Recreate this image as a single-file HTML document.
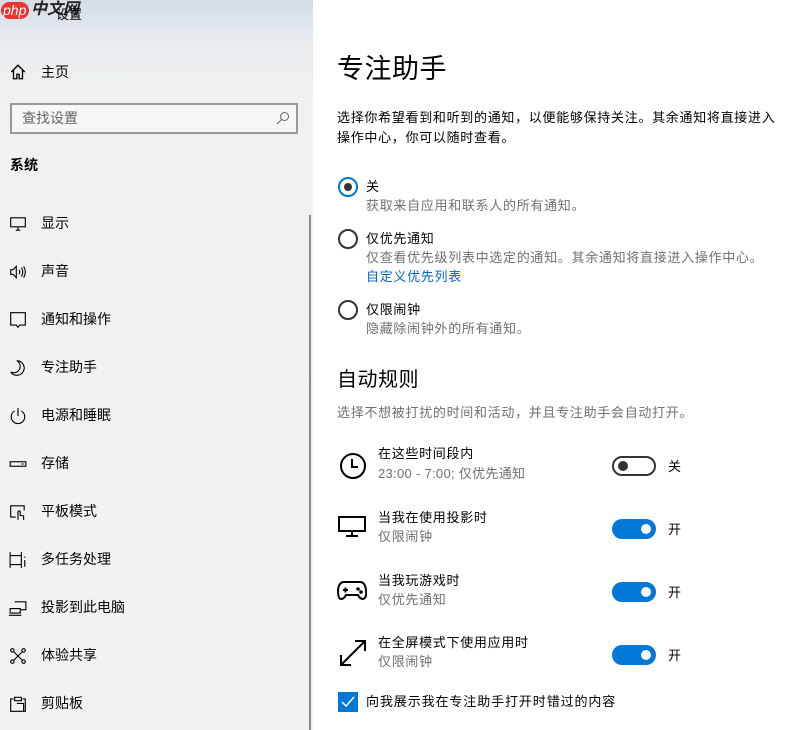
<!DOCTYPE html>
<html><head><meta charset="utf-8"><style>
*{margin:0;padding:0;box-sizing:border-box}
body{width:797px;height:730px;overflow:hidden;position:relative;background:#fff;font-family:"Liberation Sans","Noto Sans CJK SC",sans-serif;color:#000}
.side{position:absolute;left:0;top:0;width:313px;height:730px;background:linear-gradient(#d3dde4 0,#e9edf0 45px,#f1f1f1 110px,#f2f2f2 100%)}
.t{position:absolute;white-space:nowrap;line-height:1}
.s{font-size:13px;letter-spacing:.7px}
.ni{position:absolute;left:9px;width:18px;height:18px}
.nl{position:absolute;left:41px;font-size:14px;line-height:1}
.g{color:#707070}
.tog{position:absolute;left:612px;width:44px;height:20px;border-radius:10px;background:#0078d7}
.tog::after{content:"";position:absolute;right:5px;top:5px;width:10px;height:10px;border-radius:50%;background:#fff}
.tog.off{background:#fff;border:2px solid #333}
.tog.off::after{left:4px;top:3px;background:#333}
.rad{position:absolute;left:338px;width:20px;height:20px;border-radius:50%;border:2px solid #333}
</style></head><body>
<div class="side">
<div style="position:absolute;left:1px;top:2px;width:28px;height:17px;border-radius:9px;background:#e33"></div>
<div class="t" style="left:3px;top:3px;font-size:14px;font-style:italic;color:#fff">php</div>
<div class="t" style="left:31px;top:2px;font-size:16px;font-weight:bold;font-style:italic;color:#222">中文网</div>
<div class="t" style="left:56px;top:8px;font-size:13px">设置</div>
<svg class="ni" style="top:63px" viewBox="0 0 16 16" fill="none" stroke="#000" stroke-width="1.2"><path d="M2 8L8 2l6 6M4 6v8h3v-4h2v4h3V6"/></svg>
<div class="nl" style="top:65px">主页</div>
<div style="position:absolute;left:10px;top:103px;width:288px;height:31px;border:2px solid #999;background:#f7f7f7"></div>
<div class="t" style="left:22px;top:111px;font-size:14px;color:#666">查找设置</div>
<svg style="position:absolute;left:276px;top:111px" width="14" height="14" viewBox="0 0 14 14" fill="none" stroke="#666" stroke-width="1"><circle cx="8.5" cy="5.5" r="4"/><path d="M5.5 8.5L1 13"/></svg>
<div class="t" style="left:10px;top:158px;font-size:14px;font-weight:bold">系统</div>
<div style="position:absolute;left:309px;top:215px;width:2px;height:515px;background:#8a8a8a"></div>
<svg class="ni" style="top:215px" viewBox="0 0 16 16" fill="none" stroke="#000"><rect x="1.5" y="2.5" width="13" height="8"/><path d="M6 13.5h4M8 10.5v3"/></svg><div class="nl" style="top:216px">显示</div>
<svg class="ni" style="top:263px" viewBox="0 0 16 16" fill="none" stroke="#000"><path d="M1.5 6h2l3-3v10l-3-3h-2zM9 6q1 2 0 4M11 4q2.5 4 0 8M13 3q3 5 0 10"/></svg><div class="nl" style="top:264px">声音</div>
<svg class="ni" style="top:311px" viewBox="0 0 16 16" fill="none" stroke="#000"><path d="M1.5 1.5h13v11h-5l-1.5 2-1.5-2h-5z"/></svg><div class="nl" style="top:312px">通知和操作</div>
<svg class="ni" style="top:359px" viewBox="0 0 16 16" fill="none" stroke="#000"><path d="M7 1.5a6.5 6.5 0 1 1-5.5 10 5.5 5.5 0 0 0 5.5-10z"/></svg><div class="nl" style="top:360px">专注助手</div>
<svg class="ni" style="top:407px" viewBox="0 0 16 16" fill="none" stroke="#000"><path d="M5 3.5a6 6 0 1 0 6 0M8 1v7"/></svg><div class="nl" style="top:408px">电源和睡眠</div>
<svg class="ni" style="top:455px" viewBox="0 0 16 16" fill="none" stroke="#000"><rect x="1" y="6" width="14" height="4"/><path d="M11 8h2"/></svg><div class="nl" style="top:456px">存储</div>
<svg class="ni" style="top:503px" viewBox="0 0 16 16" fill="none" stroke="#000"><path d="M6 12.5H1.5v-10h12v4M8 15V8a1 1 0 0 1 2 0v3l3 .5v3.5"/></svg><div class="nl" style="top:504px">平板模式</div>
<svg class="ni" style="top:551px" viewBox="0 0 16 16" fill="none" stroke="#000"><path d="M1 1v14M11 1v14M1 4h10M1 12h10M14 5v1M14 8v6"/></svg><div class="nl" style="top:552px">多任务处理</div>
<svg class="ni" style="top:599px" viewBox="0 0 16 16" fill="none" stroke="#000"><path d="M5 2.5h10v7H10M1 8.5h9v4H1zM0 14.5h11"/></svg><div class="nl" style="top:600px">投影到此电脑</div>
<svg class="ni" style="top:647px" viewBox="0 0 16 16" fill="none" stroke="#000"><circle cx="3" cy="3" r="1.5"/><circle cx="13" cy="3" r="1.5"/><circle cx="3" cy="13" r="1.5"/><circle cx="13" cy="13" r="1.5"/><path d="M4 4l8 8M12 4l-8 8"/></svg><div class="nl" style="top:648px">体验共享</div>
<svg class="ni" style="top:695px" viewBox="0 0 16 16" fill="none" stroke="#000"><path d="M4 3.5H1.5v11h13v-11H12M5 2h6v3H5zM7 7.5h6v7"/></svg><div class="nl" style="top:696px">剪贴板</div>
</div>

<div class="t" style="left:337px;top:56px;font-size:27px;letter-spacing:.5px">专注助手</div>
<div class="t s" style="left:337px;top:111px">选择你希望看到和听到的通知，以便能够保持关注。其余通知将直接进入</div>
<div class="t s" style="left:337px;top:131px">操作中心，你可以随时查看。</div>

<div class="rad" style="top:177px;border-color:#0078d7"><div style="position:absolute;left:4px;top:4px;width:8px;height:8px;border-radius:50%;background:#333"></div></div>
<div class="t s" style="left:366px;top:180px">关</div>
<div class="t g s" style="left:366px;top:199px">获取来自应用和联系人的所有通知。</div>
<div class="rad" style="top:229px"></div>
<div class="t s" style="left:366px;top:232px">仅优先通知</div>
<div class="t g s" style="left:366px;top:251px">仅查看优先级列表中选定的通知。其余通知将直接进入操作中心。</div>
<div class="t s" style="left:366px;top:270px;color:#0066cc">自定义优先列表</div>
<div class="rad" style="top:300px"></div>
<div class="t s" style="left:366px;top:303px">仅限闹钟</div>
<div class="t g s" style="left:366px;top:322px">隐藏除闹钟外的所有通知。</div>

<div class="t" style="left:337px;top:370px;font-size:20px;letter-spacing:.5px">自动规则</div>
<div class="t g s" style="left:337px;top:406px">选择不想被打扰的时间和活动，并且专注助手会自动打开。</div>

<svg style="position:absolute;left:339px;top:452px" width="28" height="28" viewBox="0 0 28 28" fill="none" stroke="#000" stroke-width="2"><circle cx="14" cy="14" r="12"/><path d="M13 7v8h6"/></svg>
<div class="t s" style="left:378px;top:447px">在这些时间段内</div>
<div class="t g s" style="left:378px;top:467px;letter-spacing:.3px">23:00 - 7:00; 仅优先通知</div>
<div class="tog off" style="top:456px"></div><div class="t s" style="left:668px;top:460px">关</div>

<svg style="position:absolute;left:338px;top:516px" width="28" height="22" viewBox="0 0 28 22" fill="none" stroke="#000" stroke-width="2"><rect x="1" y="1" width="26" height="14"/><path d="M14 15v4M8 20h12"/></svg>
<div class="t s" style="left:378px;top:511px">当我在使用投影时</div>
<div class="t g s" style="left:378px;top:530px">仅限闹钟</div>
<div class="tog" style="top:519px"></div><div class="t s" style="left:668px;top:523px">开</div>

<svg style="position:absolute;left:337px;top:580px" width="30" height="22" viewBox="0 0 30 22" fill="none" stroke="#000" stroke-width="2"><path d="M7 2h16q5 0 6 8t-3 9q-3 0-5-4H9q-2 4-5 4T1 10q1-8 6-8zM6 10h5M8.5 7.5v5"/><circle cx="21" cy="9" r=".8" fill="#000"/><circle cx="24" cy="12" r=".8" fill="#000"/></svg>
<div class="t s" style="left:378px;top:574px">当我玩游戏时</div>
<div class="t g s" style="left:378px;top:593px">仅优先通知</div>
<div class="tog" style="top:582px"></div><div class="t s" style="left:668px;top:586px">开</div>

<svg style="position:absolute;left:338px;top:638px" width="30" height="30" viewBox="0 0 30 30" fill="none" stroke="#000" stroke-width="2"><path d="M3 27L27 3M17 3h10v10M3 17v10h10"/></svg>
<div class="t s" style="left:378px;top:636px">在全屏模式下使用应用时</div>
<div class="t g s" style="left:378px;top:655px">仅限闹钟</div>
<div class="tog" style="top:645px"></div><div class="t s" style="left:668px;top:649px">开</div>

<div style="position:absolute;left:338px;top:692px;width:20px;height:20px;background:#0078d7"><svg width="20" height="20" viewBox="0 0 20 20" fill="none" stroke="#fff" stroke-width="1.5"><path d="M4 10l4 4 8-9"/></svg></div>
<div class="t s" style="left:366px;top:695px;letter-spacing:.9px">向我展示我在专注助手打开时错过的内容</div>
</body></html>
